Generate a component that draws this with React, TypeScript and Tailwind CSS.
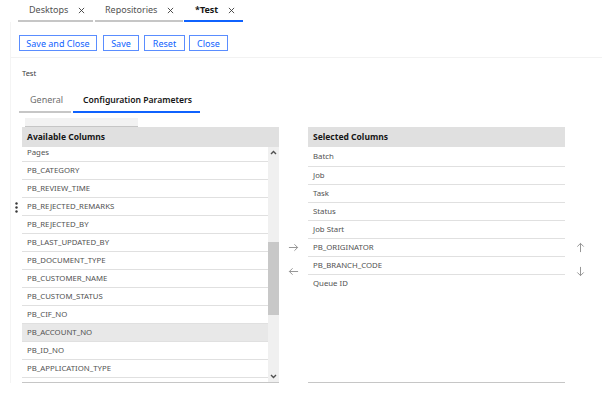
import React from 'react';

const available = [
  'Pages',
  'PB_CATEGORY',
  'PB_REVIEW_TIME',
  'PB_REJECTED_REMARKS',
  'PB_REJECTED_BY',
  'PB_LAST_UPDATED_BY',
  'PB_DOCUMENT_TYPE',
  'PB_CUSTOMER_NAME',
  'PB_CUSTOM_STATUS',
  'PB_CIF_NO',
  'PB_ACCOUNT_NO',
  'PB_ID_NO',
  'PB_APPLICATION_TYPE',
];

const selected = ['Batch', 'Job', 'Task', 'Status', 'Job Start', 'PB_ORIGINATOR', 'PB_BRANCH_CODE', 'Queue ID'];

const Close = () => (
  <svg width="7" height="7" viewBox="0 0 8 8" className="ml-[10px]">
    <path d="M1 1L7 7M7 1L1 7" stroke="#393939" strokeWidth="1" />
  </svg>
);

const Arrow: React.FC<{ dir: 'left' | 'right' | 'up' | 'down' }> = ({ dir }) => {
  const rot = { right: 0, left: 180, down: 90, up: -90 }[dir];
  return (
    <svg width="11" height="11" viewBox="0 0 12 12" style={{ transform: `rotate(${rot}deg)` }}>
      <path d="M1 6H10.5M7 2.5L10.5 6L7 9.5" stroke="#8d8d8d" strokeWidth="1" fill="none" />
    </svg>
  );
};

export default function App() {
  return (
    <div className="w-[602px] h-[393px] bg-white overflow-hidden text-[#161616]" style={{ fontFamily: '"Noto Sans", "Open Sans", sans-serif' }}>
      {/* top tabs */}
      <div className="flex pl-[18px] h-[22px] items-stretch text-[9px] whitespace-nowrap">
        <div className="flex items-center w-[75px] pl-[11px] border-b-2 border-[#c6c6c6] text-[#525252]">
          Desktops <Close />
        </div>
        <div className="flex items-center w-[88px] ml-[2px] pl-[10px] border-b-2 border-[#c6c6c6] text-[#525252]">
          Repositories <Close />
        </div>
        <div className="flex items-center w-[59px] ml-[1px] pl-[11px] border-b-2 border-[#0f62fe] font-bold text-[#161616]">
          *Test <Close />
        </div>
      </div>

      <div className="ml-[10px] border-l border-[#f4f4f4]">
        {/* buttons */}
        <div className="flex gap-[5px] pl-[8px] pt-[13px] pb-[6px] border-b border-[#f2f2f2] text-[9px] text-[#0f62fe] whitespace-nowrap">
          <button className="h-[16px] w-[78px] border border-[#5a8dff] leading-none">Save and Close</button>
          <button className="h-[16px] w-[36px] border border-[#5a8dff] leading-none ml-[1px]">Save</button>
          <button className="h-[16px] w-[41px] border border-[#5a8dff] leading-none">Reset</button>
          <button className="h-[16px] w-[39px] border border-[#5a8dff] leading-none -ml-[1px]">Close</button>
        </div>

        <div className="pl-[11px] pt-[10px] text-[7.5px] text-[#393939] leading-[10px]">Test</div>

        {/* sub tabs */}
        <div className="flex ml-[8px] mt-[11px] h-[24px] text-[9px] whitespace-nowrap">
          <div className="flex items-center w-[52px] pl-[11px] border-b-2 border-[#c6c6c6] text-[#6f6f6f]">General</div>
          <div className="flex items-center w-[127px] ml-[2px] pl-[10px] border-b-2 border-[#0f62fe] font-semibold text-[8.6px] text-[#161616]">
            Configuration Parameters
          </div>
        </div>

        {/* lists */}
        <div className="flex items-start mt-[5px]">
          <div className="w-[11px] pt-[84px] flex justify-center">
            <svg width="3" height="11" viewBox="0 0 3 11">
              <circle cx="1.5" cy="1.5" r="1.2" fill="#393939" />
              <circle cx="1.5" cy="5.5" r="1.2" fill="#393939" />
              <circle cx="1.5" cy="9.5" r="1.2" fill="#393939" />
            </svg>
          </div>

          <div className="w-[257px]">
            <div className="ml-[3px] w-[113px] h-[9px] bg-[#f2f2f2] border-b border-[#c6c6c6]" />
            <div className="h-[20px] bg-[#e0e0e0] flex items-center pl-[5px] text-[8.5px] font-bold">Available Columns</div>
            <div className="flex h-[236px] border-b border-[#c6c6c6] overflow-hidden">
              <div className="w-[246px] -mt-[3px]">
                {available.map((c) => (
                  <div
                    key={c}
                    className={`h-[18px] flex items-center pl-[5px] border-b border-[#e0e0e0] text-[7.8px] text-[#525252] ${
                      c === 'PB_ACCOUNT_NO' ? 'bg-[#e8e8e8]' : ''
                    }`}
                  >
                    {c}
                  </div>
                ))}
              </div>
              <div className="w-[11px] bg-[#f0f0f0] flex flex-col items-center">
                <svg width="7" height="5" viewBox="0 0 7 5" className="mt-[3px]">
                  <path d="M1 4L3.5 1.5L6 4" stroke="#505050" strokeWidth="1.4" fill="none" />
                </svg>
                <div className="w-[11px] h-[73px] bg-[#c8c8c8] mt-[87px]" />
                <svg width="7" height="5" viewBox="0 0 7 5" className="mt-auto mb-[3px]">
                  <path d="M1 1L3.5 3.5L6 1" stroke="#505050" strokeWidth="1.4" fill="none" />
                </svg>
              </div>
            </div>
          </div>

          <div className="w-[29px] pt-[124px] flex flex-col items-center gap-[13px]">
            <Arrow dir="right" />
            <Arrow dir="left" />
          </div>

          <div className="w-[257px] pt-[9px]">
            <div className="h-[20px] bg-[#e0e0e0] flex items-center pl-[5px] text-[8.5px] font-bold">Selected Columns</div>
            <div className="h-[236px] border-b border-[#c6c6c6]">
              {selected.map((c, i) => (
                <div
                  key={c}
                  className={`${i === 0 ? 'h-[20px] pt-[1px]' : 'h-[18px]'} flex items-center pl-[5px] ${
                    i < selected.length - 1 ? 'border-b border-[#e0e0e0]' : ''
                  } text-[7.8px] text-[#525252]`}
                >
                  {c}
                </div>
              ))}
            </div>
          </div>

          <div className="w-[30px] pt-[124px] flex flex-col items-center gap-[13px]">
            <Arrow dir="up" />
            <Arrow dir="down" />
          </div>
        </div>
      </div>
    </div>
  );
}
